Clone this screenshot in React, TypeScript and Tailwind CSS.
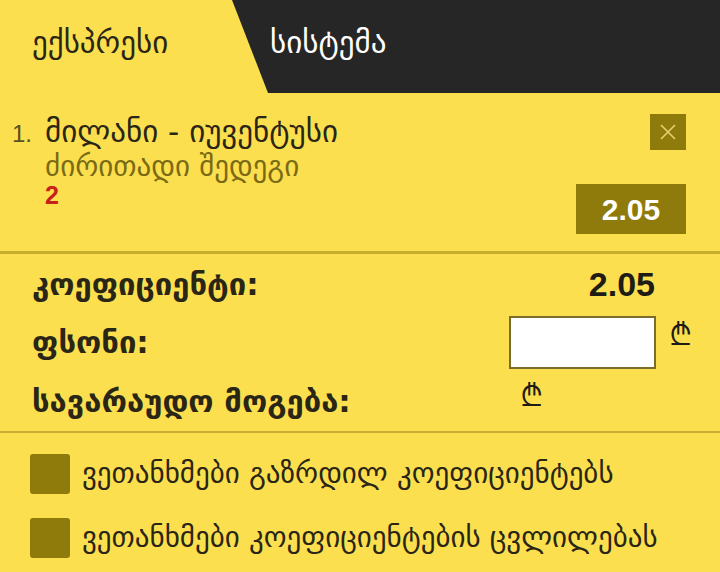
const font = { fontFamily: '"DejaVu Sans", "Noto Sans", sans-serif' }
const arial = { fontFamily: '"Liberation Sans", Arial, sans-serif' }
const lari = { fontFamily: 'Inter, Roboto, "Open Sans", Lato, "DejaVu Sans", sans-serif' }

function Checkbox({ label }: { label: string }) {
  return (
    <label className="flex items-center gap-3 h-[40px]">
      <span className="w-[40px] h-[40px] rounded-[3px] bg-[#8f7a0c] shrink-0" />
      <span className="text-[29px] text-[#2a2616] whitespace-nowrap">{label}</span>
    </label>
  )
}

export default function App() {
  return (
    <div className="w-[720px] h-[572px] bg-[#fcdf4f] overflow-hidden" style={font}>
      {/* tabs */}
      <div className="flex h-[93px] bg-[#262626]">
        <div className="w-[268px] bg-[#fcdf4f] [clip-path:polygon(0_0,232px_0,268px_100%,0_100%)] flex items-center pl-[32px] pb-[8px]">
          <span className="text-[31px] text-[#2a2616]">ექსპრესი</span>
        </div>
        <div className="flex items-center pl-[2px] pb-[8px]">
          <span className="text-[31px] text-white">სისტემა</span>
        </div>
      </div>

      {/* selection */}
      <div className="h-[158px] flex justify-between pl-[12px] pr-[34px]">
        <div className="flex items-baseline gap-[13px] pt-[23px]">
          <span className="text-[24px] text-[#5a5020]" style={arial}>1.</span>
          <div className="flex flex-col">
            <span className="text-[31px] text-[#2a2616] leading-[30px] whitespace-nowrap">მილანი - იუვენტუსი</span>
            <span className="text-[29px] text-[#7a6a14] leading-[40px] whitespace-nowrap">ძირითადი შედეგი</span>
            <span className="text-[25px] font-bold text-[#c8201a] leading-[18px]" style={arial}>2</span>
          </div>
        </div>
        <div className="flex flex-col items-end pt-[21px]">
          <button className="w-[36px] h-[36px] bg-[#8f7a0c] flex items-center justify-center">
            <svg width="18" height="18" viewBox="0 0 18 18" stroke="#e6d070" strokeWidth="1.6">
              <path d="M2 2 L16 16 M16 2 L2 16" />
            </svg>
          </button>
          <div className="mt-[34px] w-[110px] h-[50px] bg-[#8f7a0c] flex items-center justify-center">
            <span className="text-[30px] font-bold text-white" style={arial}>2.05</span>
          </div>
        </div>
      </div>

      <div className="h-[3px] bg-[#c9ae2e]" />

      {/* stake */}
      <div className="h-[177px] flex flex-col pl-[32px] pt-[12px]">
        <div className="flex items-center h-[36px]">
          <span className="w-[477px] text-[31px] font-bold text-[#2a2616] whitespace-nowrap">კოეფიციენტი:</span>
          <span className="w-[146px] text-right text-[34px] font-bold text-[#1e1c14]" style={arial}>2.05</span>
        </div>
        <div className="flex items-center h-[52px] mt-[14px]">
          <span className="w-[477px] text-[31px] font-bold text-[#2a2616] whitespace-nowrap">ფსონი:</span>
          <input className="w-[147px] h-[53px] bg-white border-2 border-[#7a6c2c] outline-none" />
          <span className="ml-[13px] -mt-[18px] text-[33px] font-light leading-none text-[#1e1c14]" style={lari}>₾</span>
        </div>
        <div className="flex items-center h-[40px] mt-[13px]">
          <span className="w-[488px] text-[31px] font-bold text-[#2a2616] whitespace-nowrap">სავარაუდო მოგება:</span>
          <span className="-mt-[14px] text-[33px] font-light leading-none text-[#1e1c14]" style={lari}>₾</span>
        </div>
      </div>

      <div className="h-[2px] bg-[#c9ae36]" />

      {/* agreements */}
      <div className="flex flex-col gap-[24px] pl-[30px] pt-[21px]">
        <Checkbox label="ვეთანხმები გაზრდილ კოეფიციენტებს" />
        <Checkbox label="ვეთანხმები კოეფიციენტების ცვლილებას" />
      </div>
    </div>
  )
}
